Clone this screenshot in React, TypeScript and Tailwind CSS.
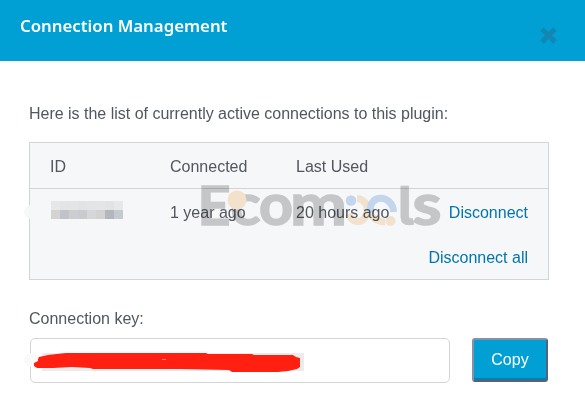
const maskTop = ["#e6e7e9", "#e2e4e7", "#e4e5e7", "#e2e3e5", "#e3e4e6", "#e4e5e7", "#e2e3e5", "#e6e8ea"];
const maskBottom = ["#d3d3d2", "#c0c3ca", "#cbcdd0", "#c9cbce", "#d5d7da", "#d3d2d2", "#b5b6b9", "#c5c9d1"];

function MaskedId() {
  return (
    <div className="-mt-[7px] ml-px w-[72px]">
      <div className="flex h-[9px]">
        {maskTop.map((color, i) => (
          <div key={i} className="flex-1" style={{ backgroundColor: color }} />
        ))}
      </div>
      <div className="flex h-[9px]">
        {maskBottom.map((color, i) => (
          <div key={i} className="flex-1" style={{ backgroundColor: color }} />
        ))}
      </div>
    </div>
  );
}

function CloseIcon() {
  return (
    <svg className="mt-[27px] text-[#1386b2]" width="17" height="17" viewBox="0 0 17 17" fill="none" stroke="currentColor" strokeWidth="4.600">
      <path d="M2 2L15 15M15 2L2 15" />
    </svg>
  );
}

function Watermark() {
  return (
    <svg
      className="pointer-events-none absolute top-[155px] left-[190px] mix-blend-multiply"
      width="260"
      height="95"
      viewBox="190 155 260 95"
    >
      <g className="font-['Lato','Open_Sans',sans-serif]" fill="#cdcdcd" stroke="#cdcdcd" strokeWidth="1.500" fontWeight="700">
        <text x="197.500" y="224.500" fontSize="54" textLength="33" lengthAdjust="spacingAndGlyphs">E</text>
        <text x="230.500" y="224.500" fontSize="57" textLength="30" lengthAdjust="spacingAndGlyphs">c</text>
        <text x="259" y="224.500" fontSize="57" textLength="34" lengthAdjust="spacingAndGlyphs">o</text>
        <text x="290" y="224.500" fontSize="57" textLength="57" lengthAdjust="spacingAndGlyphs">m</text>
        <text
          className="font-['Inter'] [font-feature-settings:'cv05']"
          x="397.500"
          y="224.500"
          fontSize="54"
          strokeWidth="0.500"
        >
          l
        </text>
        <text x="412.500" y="224.500" fontSize="57" textLength="29" lengthAdjust="spacingAndGlyphs">s</text>
      </g>
      <circle cx="237" cy="200" r="9.500" fill="#fde9d0" />
      <g fill="none" strokeWidth="7">
        <path d="M348.500 214C353 224 363 224 366.500 214C369 205 364 199 357 198.500" stroke="#fbe9d2" />
        <path d="M370 211C371 218 377 221.500 385 222" stroke="#fbe9d2" />
        <path d="M371 213C366.500 193.500 393 193.500 393.500 212" stroke="#cbdcf4" />
      </g>
      <circle cx="351" cy="200.500" r="5.300" fill="#cbdcf4" />
      <circle cx="390.500" cy="221" r="5" fill="#fbe9d2" />
    </svg>
  );
}

export default function App() {
  return (
    <div className="relative isolate h-[405px] w-[585px] overflow-hidden bg-white font-['Liberation_Sans',Arial,sans-serif] text-[16px] leading-6 text-[#50575e]">
      <header className="flex h-[61px] items-start justify-between bg-[#00a0d5] pr-[28px] pl-[20px]">
        <h1 className="mt-[14px] font-['Noto_Sans',sans-serif] text-[16.8px] leading-6 font-semibold text-white">
          Connection Management
        </h1>
        <CloseIcon />
      </header>

      <main className="pt-[41px] pr-[36px] pl-[29px]">
        <p className="tracking-[-0.01px]">Here is the list of currently active connections to this plugin:</p>

        <section className="mt-[16px] h-[138px] border border-[#d2d4d6] bg-[#f6f7f9]">
          <div className="grid h-[46px] grid-cols-[120px_126px_1fr] items-center border-b border-[#d2d4d6] pt-[2px] pl-[20px]">
            <span>ID</span>
            <span>Connected</span>
            <span>Last Used</span>
          </div>
          <div className="grid h-[46px] grid-cols-[120px_126px_1fr_auto] items-center pt-[2px] pr-[20px] pl-[20px]">
            <MaskedId />
            <span>1 year ago</span>
            <span>20 hours ago</span>
            <a className="text-[#0075af]">Disconnect</a>
          </div>
          <div className="flex h-[44px] items-center justify-end pt-[2px] pr-[20px]">
            <a className="text-[#0075af]">Disconnect all</a>
          </div>
        </section>

        <p className="mt-[27px]">Connection key:</p>
        <div className="mt-[7px] flex">
          <div className="ml-px h-[45px] w-[420px] rounded-[5px] border border-[#d2d4d6]" />
          <button className="ml-[22px] h-[44px] w-[76px] rounded-[3px] border-2 border-t-[#8791a6] border-r-[#596078] border-b-[#596078] border-l-[#8791a6] bg-[#00a0d5] text-white shadow-[inset_0_-2px_#087eaa]">
            Copy
          </button>
        </div>
      </main>

      <Watermark />
      {/* smudges and marker strokes over the hidden values */}
      <svg className="pointer-events-none absolute top-[200px] left-[20px]" width="30" height="30">
        <circle cx="11" cy="12" r="7" fill="#f6f7f9" />
      </svg>
      <svg className="pointer-events-none absolute top-[345px] left-[20px]" width="290" height="40" viewBox="20 345 290 40">
        <circle cx="31" cy="360" r="7" fill="#fafafa" />
        <path d="M42 353H304V371H42Z" fill="#ececec" />
        <path
          d="M38 359L39 357L48 355L66 353H206L208 354H252L254 355H293L296 357L300 358V367L297 369L288 371L278 372H232L229 370L181 369H93L90 368L72 367L53 368H37L34 366V363L38 361Z"
          fill="#ff2012"
        />
        <path d="M162 359.500H166" stroke="#ff8a80" strokeWidth="1" />
      </svg>
    </div>
  );
}
